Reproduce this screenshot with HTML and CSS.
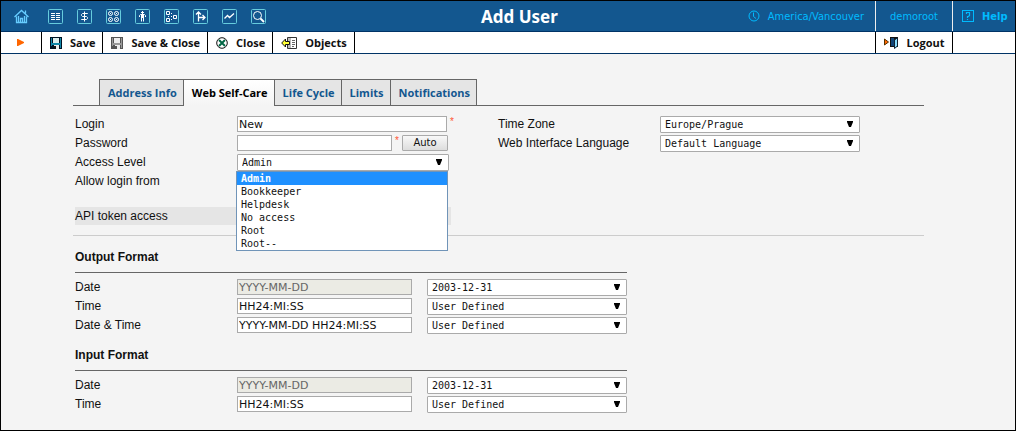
FILE: index.html
```html
<!DOCTYPE html>
<html lang="en">
<head>
<meta charset="utf-8">
<title>Add User</title>
<link rel="stylesheet" href="styles.css">
</head>
<body>
<header class="topbar">
  <nav class="nav">
    <a href="#" class="nav-home" aria-label="Home"><svg width="15" height="15" viewBox="0 0 15 15" fill="none" stroke="#6cf"><path d="M0.5 8 7.5 1.500 14.500 8M11.500 4.500V1.500M2.500 7.500V13.500H12.500V7.500M4.500 7v6M10.500 7v6M6.500 13V9.500h2V13" stroke-width="1.300"/></svg></a>
    <a href="#" aria-label="List"><svg width="15" height="15" viewBox="0 0 15 15" fill="none" stroke="#fff"><rect x=".5" y=".5" width="14" height="14" rx="1" stroke="#6cd"/><path d="M3 4.500h4M8 4.500h4M3 6.500h4M8 6.500h4M3 8.500h4M8 8.500h4M3 10.500h4M8 10.500h4"/></svg></a>
    <a href="#" aria-label="Billing"><svg width="15" height="15" viewBox="0 0 15 15" fill="none" stroke="#fff"><rect x=".5" y=".5" width="14" height="14" rx="1" stroke="#6cd"/><path d="M7.500 2.500v10M10.500 5V4.500H5.500L4.500 5.500V6.500L5.500 7.500H9.500L10.500 8.500V9.500L9.500 10.500H4.500V10"/></svg></a>
    <a href="#" aria-label="Products"><svg width="15" height="15" viewBox="0 0 15 15" fill="none" stroke="#fff"><rect x=".5" y=".5" width="14" height="14" rx="1" stroke="#6cd"/><circle cx="4.500" cy="4.500" r="2"/><circle cx="10.500" cy="4.500" r="2"/><circle cx="4.500" cy="10.500" r="2"/><circle cx="10.500" cy="10.500" r="2"/><path d="M4 4.500h1M10 4.500h1M4 10.500h1M10 10.500h1"/></svg></a>
    <a href="#" aria-label="Customers"><svg width="15" height="15" viewBox="0 0 15 15" fill="none" stroke="#fff"><rect x=".5" y=".5" width="14" height="14" rx="1" stroke="#6cd"/><path d="M6 3.500h3M7.500 2v3M4.500 8V6.500L5.500 5.500h4L10.500 6.500V8M7.500 5v4M6.500 6v6.500M8.500 6v6.500"/></svg></a>
    <a href="#" aria-label="Network"><svg width="15" height="15" viewBox="0 0 15 15" fill="none" stroke="#fff"><rect x=".5" y=".5" width="14" height="14" rx="1" stroke="#6cd"/><path d="M2.500 2.500h3v3h-3zM2.500 9.500h3v3h-3zM9.500 6.500h3v3h-3zM7 4.500h1M7 10.500h1M4 7.500h1M7 7.500h1"/></svg></a>
    <a href="#" aria-label="Routing"><svg width="15" height="15" viewBox="0 0 15 15" fill="none" stroke="#fff"><rect x=".5" y=".5" width="14" height="14" rx="1" stroke="#6cd"/><path d="M5.500 12.500V3M3 5.500 5.500 3 8 5.500M5.500 8.500H12M9.500 6 12 8.500 9.500 11" stroke-width="1.300"/></svg></a>
    <a href="#" aria-label="Statistics"><svg width="15" height="15" viewBox="0 0 15 15" fill="none" stroke="#fff"><rect x=".5" y=".5" width="14" height="14" rx="1" stroke="#6cd"/><path d="M2.500 9.500 5.500 6.500 7.500 8.500 12 4.500" stroke-width="1.300"/></svg></a>
    <a href="#" aria-label="Search"><svg width="15" height="15" viewBox="0 0 15 15" fill="none" stroke="#fff"><rect x=".5" y=".5" width="14" height="14" rx="1" stroke="#6cd"/><circle cx="6.500" cy="6.500" r="4"/><path d="M9.500 9.500 13 13" stroke-width="1.800"/></svg></a>
  </nav>
  <h1 class="title">Add User</h1>
  <div class="zone"><svg width="12" height="12" viewBox="0 0 12 12" fill="none" stroke="#0bf"><circle cx="6" cy="6" r="5"/><path d="M5.500 2.500V6.500L8 8.500"/></svg><a href="#">America/Vancouver</a></div>
  <div class="account"><a href="#">demoroot</a></div>
  <div class="help"><svg width="12" height="12" viewBox="0 0 12 12" fill="none" stroke="#0bf"><rect x=".5" y=".5" width="11" height="11"/><path d="M4.500 4V2.500h3v3L6.500 6.500H5.500V8M5.500 9v1" stroke-width="1.200"/></svg><a href="#">Help</a></div>
</header>
<div class="toolbar">
  <div class="marker"><svg width="7" height="7" viewBox="0 0 7 7"><path d="M0 0h1l6 3v1L1 7H0z" fill="#f60"/></svg></div>
  <button type="button"><svg width="12" height="12" viewBox="0 0 12 12"><path d="M0 0h12v12H0z" fill="#012"/><path d="M1 1h1v8H1zM10 1h1v10h-1zM2 6h8v2H2z" fill="#18a"/><path d="M3 1h6v5H3z" fill="#dee"/><path d="M4 8h5v4H4z" fill="#eee"/><path d="M4 9h2v3H4z" fill="#111"/></svg>Save</button>
  <button type="button"><svg width="12" height="12" viewBox="0 0 12 12"><path d="M0 0h12v12H0z" fill="#555"/><path d="M1 1h1v8H1zM10 1h1v10h-1zM2 6h8v2H2z" fill="#999"/><path d="M3 1h6v5H3z" fill="#eee"/><path d="M4 8h5v4H4z" fill="#eee"/><path d="M4 9h2v3H4z" fill="#555"/></svg>Save &amp; Close</button>
  <button type="button"><svg width="12" height="12" viewBox="0 0 12 12" fill="none"><circle cx="6" cy="6" r="5.300" fill="#fff" stroke="#111"/><path d="M3 3l6 6M9 3 3 9" stroke="#064" stroke-width="2"/></svg>Close</button>
  <button type="button" class="objects"><svg width="16" height="12" viewBox="0 0 16 12"><path d="M6.500.5h9v11h-9z" fill="#fff" stroke="#333"/><path d="M7 1h3v10H7z" fill="#bbb"/><path d="M11 3.500h3M11 5.500h3M11 7.500h3M11 9.500h2" stroke="#666"/><path d="M.7 6 4.500 2v2.500h4v3h-4V10z" fill="#ff3" stroke="#111"/></svg>Objects</button>
  <button type="button" class="logout"><svg width="14" height="12" viewBox="0 0 14 12"><path d="M.5 2v6L4.500 5z" fill="#f60" stroke="#530"/><path d="M6 0h8v10H6z" fill="#111"/><path d="M7 1h3v8H7z" fill="#147"/><path d="M10.500 3 13.500.7V9L10.500 11.500z" fill="#8df" stroke="#123"/></svg>Logout</button>
  <div class="spare"></div>
</div>
<main class="page">
  <nav class="tabs">
    <a href="#">Address Info</a>
    <a href="#" class="active" aria-current="page">Web Self-Care</a>
    <a href="#">Life Cycle</a>
    <a href="#">Limits</a>
    <a href="#">Notifications</a>
  </nav>
  <form>
    <div class="columns">
      <div class="column">
        <div class="row"><label for="login">Login</label><input id="login" class="wide" type="text" value="New"><span class="required">*</span></div>
        <div class="row"><label for="password">Password</label><input id="password" class="password" type="password"><span class="required">*</span><button type="button" class="auto">Auto</button></div>
        <div class="row"><label for="level">Access Level</label>
          <div class="combo">
            <select id="level"><option>Admin</option><option>Bookkeeper</option><option>Helpdesk</option><option>No access</option><option>Root</option><option>Root--</option></select>
            <ul class="menu" role="listbox" aria-label="Access Level">
              <li role="option" aria-selected="true" class="selected">Admin</li>
              <li role="option">Bookkeeper</li>
              <li role="option">Helpdesk</li>
              <li role="option">No access</li>
              <li role="option">Root</li>
              <li role="option">Root--</li>
            </ul>
          </div>
        </div>
        <div class="row"><span class="name">Allow login from</span></div>
        <div class="row shaded"><span class="name">API token access</span></div>
      </div>
      <div class="column">
        <div class="row"><label for="tz">Time Zone</label><select id="tz"><option>Europe/Prague</option></select></div>
        <div class="row"><label for="lang">Web Interface Language</label><select id="lang"><option>Default Language</option></select></div>
      </div>
    </div>
    <section class="format">
      <h2>Output Format</h2>
      <div class="row"><label for="od">Date</label><input id="od" type="text" value="YYYY-MM-DD" disabled><select aria-label="Output date format"><option>2003-12-31</option></select></div>
      <div class="row"><label for="ot">Time</label><input id="ot" type="text" value="HH24:MI:SS"><select aria-label="Output time format"><option>User Defined</option></select></div>
      <div class="row"><label for="odt">Date &amp; Time</label><input id="odt" type="text" value="YYYY-MM-DD HH24:MI:SS"><select aria-label="Output date and time format"><option>User Defined</option></select></div>
    </section>
    <section class="format">
      <h2>Input Format</h2>
      <div class="row"><label for="id">Date</label><input id="id" type="text" value="YYYY-MM-DD" disabled><select aria-label="Input date format"><option>2003-12-31</option></select></div>
      <div class="row"><label for="it">Time</label><input id="it" type="text" value="HH24:MI:SS"><select aria-label="Input time format"><option>User Defined</option></select></div>
    </section>
  </form>
</main>
</body>
</html>
```
FILE: styles.css
```css
* { box-sizing: border-box; }
body {
  margin: 0;
  min-height: 100vh;
  border: 1px solid #000;
  background: #f4f4f4;
  color: #111;
  font: 12px "Liberation Sans", Arial, sans-serif;
}
svg { display: block; flex: none; }
a { text-decoration: none; color: inherit; }

.topbar {
  display: flex;
  height: 31px;
  background: #13578f;
  border-bottom: 1px solid #036;
  color: #0bf;
  font: 11px "DejaVu Sans Condensed", Tahoma, sans-serif;
}
.nav { display: flex; align-items: center; gap: 14px; padding: 0 25px 0 13px; }
.nav-home { margin-right: 5px; }
.title {
  flex: 1;
  margin: 0;
  text-align: center;
  color: #fff;
  font: bold 17px/32px "Noto Sans", Tahoma, sans-serif;
}
.zone, .account, .help { display: flex; align-items: center; gap: 8px; }
.zone { padding-right: 11px; }
.account { justify-content: center; width: 78px; border: solid #eee; border-width: 0 1px; }
.help { width: 62px; padding-left: 9px; font-weight: bold; }

.toolbar {
  display: flex;
  height: 22px;
  background: #fff;
  border-bottom: 1px solid #036;
}
.marker { display: flex; align-items: center; width: 41px; padding-left: 16px; border-right: 1px solid #000; }
.toolbar button {
  display: flex;
  align-items: center;
  gap: 8px;
  padding: 0 7px 0 8px;
  border: 0;
  border-right: 1px solid #000;
  background: none;
  color: #111;
  font: bold 11px "Open Sans", Tahoma, sans-serif;
}
.toolbar .logout {
  justify-content: center;
  width: 78px;
  margin-left: auto;
  border-left: 1px solid #000;
}
.spare { width: 62px; }

.page { padding: 25px 91px 14px 72px; }
.tabs {
  display: flex;
  padding-left: 26px;
  border-bottom: 1px solid #666;
  font: bold 11px "Open Sans", Tahoma, sans-serif;
  color: #13578f;
}
.tabs a {
  padding: 0 6px 0 8px;
  border: solid #666;
  border-width: 1px 1px 0 0;
  background: #e5e5e5;
  line-height: 25px;
}
.tabs a:first-child { border-left-width: 1px; }
.tabs .active {
  margin-bottom: -1px;
  background: linear-gradient(#fff, #f4f4f4);
  color: #000;
}

.columns {
  display: flex;
  margin-bottom: 13px;
  padding: 10px 0 10px 2px;
  border-bottom: 1px solid #ccc;
}
.column:first-child { width: 423px; }
.row { display: flex; align-items: flex-start; height: 19px; }
.row label, .name { flex: none; width: 162px; line-height: 17px; }
.shaded { width: 376px; height: 18px; margin-top: 15px; background: #e5e5e5; }
.shaded .name { line-height: 19px; }
.required { width: 10px; padding-left: 3px; color: #f53; font-size: 10px; line-height: 12px; }

input, select, .auto {
  height: 16px;
  margin: 0;
  border: 1px solid #aaa;
  background: #fff;
  color: #111;
  font: 11px "DejaVu Sans", Verdana, sans-serif;
}
input { width: 175px; padding: 0 1px; }
input:disabled { background: #ebebe4; color: #666; }
.wide { width: 210px; }
.password { width: 155px; }
.auto {
  width: 46px;
  padding: 0;
  border-radius: 1px;
  background: linear-gradient(#f8f8f8, #ddd);
  font-size: 10px;
  line-height: 14px;
}
select {
  width: 200px;
  height: 17px;
  padding: 0 4px;
  border-radius: 1px;
  appearance: none;
  background: #fff url("data:image/svg+xml,%3Csvg xmlns='http://www.w3.org/2000/svg' width='6' height='6'%3E%3Cpath d='M0 0h6v1L4 6H2L0 1z'/%3E%3C/svg%3E") no-repeat right 6px top 4px;
  font: 10px "DejaVu Sans Mono", Consolas, monospace;
}
.combo { position: relative; width: 212px; }
.combo select { width: 100%; }
.menu {
  position: absolute;
  top: 17px;
  left: -1px;
  width: 212px;
  margin: 0;
  padding: 0;
  border: 1px solid #7094b8;
  background: #fff;
  list-style: none;
  font: 10px/13px "DejaVu Sans Mono", Consolas, monospace;
}
.menu li { padding-left: 4px; }
.menu .selected { background: #1e90ff; color: #fff; font-weight: bold; }

.format { width: 552px; margin-left: 2px; }
.format + .format { margin-top: 11px; }
.format h2 {
  margin: 0 0 6px;
  padding-bottom: 7px;
  border-bottom: 1px solid #666;
  font-size: 12px;
  line-height: 16px;
}
.format input { margin-right: 15px; }
```
